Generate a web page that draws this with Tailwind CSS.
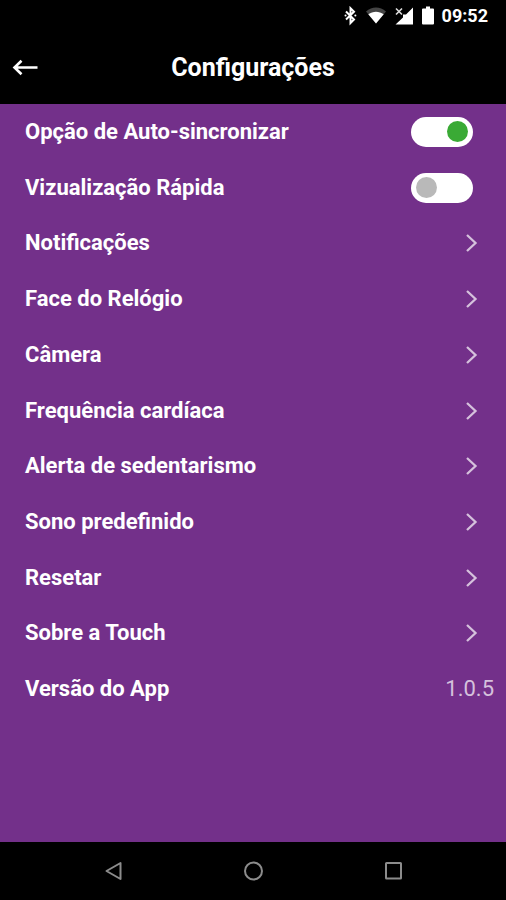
<!DOCTYPE html>
<html lang="pt-BR">
<head>
<meta charset="utf-8">
<meta name="viewport" content="width=device-width, initial-scale=1">
<title>Configurações</title>
<script src="https://cdn.jsdelivr.net/npm/@tailwindcss/browser@4"></script>
</head>
<body class="flex min-h-screen flex-col bg-[#73308a] font-['Roboto','Liberation_Sans',sans-serif] text-white">
  <div class="flex h-8 items-center justify-end bg-black pr-[18px]">
    <svg class="mr-2 h-5 w-4" viewBox="0 0 16 20" fill="none" stroke="#fff" stroke-width="2" aria-label="Bluetooth"><path d="M4 5.500 12 13.500 8.500 17V2.200L12 5.700 4 13.500"/><path d="M3.500 9.600h.1M13.300 9.600h.1" stroke-width="2" stroke-linecap="round"/></svg>
    <svg class="mr-2 h-5 w-5" viewBox="0 0 20 20" aria-label="Wi-Fi"><path d="M0 5.500C6 .2 14 .2 20 5.500L10 17.500Z" fill="#444"/><path d="M2.300 8.200C7 4.800 13 4.800 17.700 8.200L10 17.500Z" fill="#fff"/></svg>
    <svg class="mr-2 h-5 w-5" viewBox="0 0 20 20" aria-label="Sinal"><path d="M19 1.500V18.500H1.500L9 11.500V8.500H12Z" fill="#fff"/><path d="M2 2.500 8 8.500M8 2.500 2 8.500" stroke="#ddd" stroke-width="1.600"/></svg>
    <svg class="mr-2 h-5 w-3" viewBox="0 0 12 20" aria-label="Bateria"><path d="M4 .5h4v2h3a1 1 0 0 1 1 1v14a1 1 0 0 1-1 1H1a1 1 0 0 1-1-1v-14a1 1 0 0 1 1-1h3Z" fill="#fff"/></svg>
    <time class="text-lg leading-8 font-bold">09:52</time>
  </div>

  <header class="grid h-[72px] grid-cols-[48px_1fr_48px] items-center bg-black">
    <button type="button" class="flex h-12 items-center pl-3" aria-label="Voltar">
      <svg class="h-6 w-7" viewBox="0 0 28 24" fill="none" stroke="#fff" stroke-width="2.600"><path d="M25.500 11.500H2.500M9.500 4.800 2.500 11.500 9.500 18.200"/></svg>
    </button>
    <h1 class="text-center text-[25px] leading-8 font-bold">Configurações</h1>
  </header>

  <main class="grow">
    <ul class="flex h-[613px] flex-col text-[22px] leading-7 font-bold">
      <li class="flex flex-1 items-center justify-between pr-[33px] pl-[25px]">
        <label for="sync">Opção de Auto-sincronizar</label>
        <input id="sync" type="checkbox" role="switch" checked class="flex h-[30px] w-[62px] appearance-none items-center rounded-full bg-white px-[5px] before:size-[21px] before:rounded-full before:bg-[#b9b9b9] checked:justify-end checked:before:bg-[#3aaa35]">
      </li>
      <li class="flex flex-1 items-center justify-between pr-[33px] pl-[25px]">
        <label for="quick">Vizualização Rápida</label>
        <input id="quick" type="checkbox" role="switch" class="flex h-[30px] w-[62px] appearance-none items-center rounded-full bg-white px-[5px] before:size-[21px] before:rounded-full before:bg-[#b9b9b9] checked:justify-end checked:before:bg-[#3aaa35]">
      </li>
      <li class="flex flex-1"><a href="#notificacoes" class="flex flex-1 items-center justify-between pr-7 pl-[25px]">Notificações<svg class="h-5 w-3.5" viewBox="0 0 14 20" fill="none" stroke="#d5c1dc" stroke-width="2.300"><path d="M3 2 11.500 10 3 18"/></svg></a></li>
      <li class="flex flex-1"><a href="#relogio" class="flex flex-1 items-center justify-between pr-7 pl-[25px]">Face do Relógio<svg class="h-5 w-3.5" viewBox="0 0 14 20" fill="none" stroke="#d5c1dc" stroke-width="2.300"><path d="M3 2 11.500 10 3 18"/></svg></a></li>
      <li class="flex flex-1"><a href="#camera" class="flex flex-1 items-center justify-between pr-7 pl-[25px]">Câmera<svg class="h-5 w-3.5" viewBox="0 0 14 20" fill="none" stroke="#d5c1dc" stroke-width="2.300"><path d="M3 2 11.500 10 3 18"/></svg></a></li>
      <li class="flex flex-1"><a href="#frequencia" class="flex flex-1 items-center justify-between pr-7 pl-[25px]">Frequência cardíaca<svg class="h-5 w-3.5" viewBox="0 0 14 20" fill="none" stroke="#d5c1dc" stroke-width="2.300"><path d="M3 2 11.500 10 3 18"/></svg></a></li>
      <li class="flex flex-1"><a href="#alerta" class="flex flex-1 items-center justify-between pr-7 pl-[25px]">Alerta de sedentarismo<svg class="h-5 w-3.5" viewBox="0 0 14 20" fill="none" stroke="#d5c1dc" stroke-width="2.300"><path d="M3 2 11.500 10 3 18"/></svg></a></li>
      <li class="flex flex-1"><a href="#sono" class="flex flex-1 items-center justify-between pr-7 pl-[25px]">Sono predefinido<svg class="h-5 w-3.5" viewBox="0 0 14 20" fill="none" stroke="#d5c1dc" stroke-width="2.300"><path d="M3 2 11.500 10 3 18"/></svg></a></li>
      <li class="flex flex-1"><a href="#resetar" class="flex flex-1 items-center justify-between pr-7 pl-[25px]">Resetar<svg class="h-5 w-3.5" viewBox="0 0 14 20" fill="none" stroke="#d5c1dc" stroke-width="2.300"><path d="M3 2 11.500 10 3 18"/></svg></a></li>
      <li class="flex flex-1"><a href="#sobre" class="flex flex-1 items-center justify-between pr-7 pl-[25px]">Sobre a Touch<svg class="h-5 w-3.5" viewBox="0 0 14 20" fill="none" stroke="#d5c1dc" stroke-width="2.300"><path d="M3 2 11.500 10 3 18"/></svg></a></li>
      <li class="flex flex-1 items-center justify-between pr-3 pl-[25px]"><span>Versão do App</span><span class="font-normal text-[#d5c1dc]">1.0.5</span></li>
    </ul>
  </main>

  <nav class="flex h-[58px] items-center justify-center gap-[116px] bg-black" aria-label="Sistema">
    <button type="button" aria-label="Voltar ao anterior"><svg class="size-6" viewBox="0 0 24 24" fill="none" stroke="#8c8c8c" stroke-width="2" stroke-linejoin="round"><path d="M19.500 4V20L5.500 12Z"/></svg></button>
    <button type="button" aria-label="Início"><svg class="size-6" viewBox="0 0 24 24" fill="none" stroke="#8c8c8c" stroke-width="2"><circle cx="12.500" cy="12" r="8.500"/></svg></button>
    <button type="button" aria-label="Recentes"><svg class="size-6" viewBox="0 0 24 24" fill="none" stroke="#8c8c8c" stroke-width="2"><rect x="5" y="4" width="15" height="15.500" rx=".5"/></svg></button>
  </nav>
</body>
</html>
